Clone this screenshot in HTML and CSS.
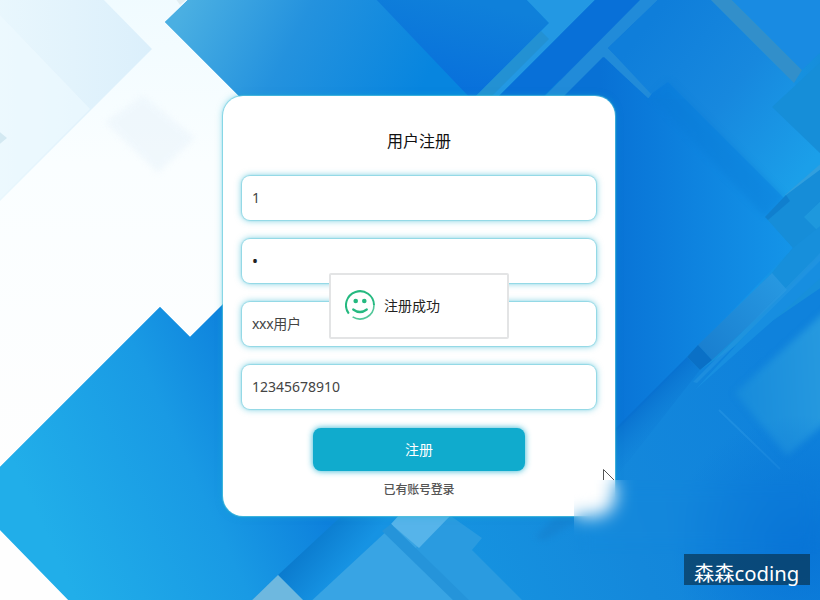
FILE: index.html
```html
<!DOCTYPE html>
<html lang="zh-CN">
<head>
<meta charset="utf-8">
<title>用户注册</title>
<link rel="stylesheet" href="styles.css">
</head>
<body>
<svg class="backdrop" viewBox="0 0 820 600" aria-hidden="true">
  <defs>
    <linearGradient id="base" gradientUnits="userSpaceOnUse" x1="180" y1="0" x2="820" y2="0"><stop offset="0" stop-color="#43a9e4"/><stop offset=".25" stop-color="#168de0"/><stop offset=".68" stop-color="#0872d8"/><stop offset=".9" stop-color="#1596e8"/><stop offset="1" stop-color="#168edb"/></linearGradient>
    <linearGradient id="top" gradientUnits="userSpaceOnUse" x1="180" y1="15" x2="400" y2="130"><stop offset="0" stop-color="#4aafe2"/><stop offset=".45" stop-color="#2492de"/><stop offset="1" stop-color="#0785df"/></linearGradient>
    <linearGradient id="left" gradientUnits="userSpaceOnUse" x1="30" y1="500" x2="270" y2="390"><stop offset="0" stop-color="#21aee9"/><stop offset=".6" stop-color="#199ae4"/><stop offset="1" stop-color="#0d80dc"/></linearGradient>
    <linearGradient id="pale" x1="0" y1="0" x2="1" y2="0"><stop offset="0" stop-color="#e9f7fd"/><stop offset="1" stop-color="#dbeffb"/></linearGradient>
    <linearGradient id="white" x1="0" y1="0" x2="0" y2="1"><stop offset="0" stop-color="#f0fbff"/><stop offset=".35" stop-color="#fafeff"/><stop offset="1" stop-color="#fefefe"/></linearGradient>
    <linearGradient id="dark" x1="0" y1="1" x2=".4" y2="0"><stop offset="0" stop-color="#066bdc"/><stop offset="1" stop-color="#0f80da"/></linearGradient>
    <linearGradient id="panel" gradientUnits="userSpaceOnUse" x1="620" y1="60" x2="790" y2="190"><stop offset="0" stop-color="#0f7eda"/><stop offset=".5" stop-color="#1788de"/><stop offset="1" stop-color="#1b9fe9"/></linearGradient>
    <linearGradient id="deep" gradientUnits="userSpaceOnUse" x1="600" y1="0" x2="790" y2="0"><stop offset="0" stop-color="#0871d5"/><stop offset=".5" stop-color="#0e83df"/><stop offset="1" stop-color="#1494e8"/></linearGradient>
    <linearGradient id="low" gradientUnits="userSpaceOnUse" x1="430" y1="580" x2="800" y2="430"><stop offset="0" stop-color="#1695e1"/><stop offset=".5" stop-color="#1488db"/><stop offset="1" stop-color="#0f82dc"/></linearGradient>
    <linearGradient id="shade" gradientUnits="userSpaceOnUse" x1="650" y1="388" x2="680" y2="418"><stop offset="0" stop-color="#086fce"/><stop offset="1" stop-color="#0e7dd6" stop-opacity="0"/></linearGradient>
    <linearGradient id="beam" gradientUnits="userSpaceOnUse" x1="700" y1="350" x2="790" y2="270"><stop offset="0" stop-color="#197fd0"/><stop offset="1" stop-color="#299be3"/></linearGradient>
    <linearGradient id="facet" x1="0" y1=".4" x2="1" y2=".3"><stop offset="0" stop-color="#178bdb"/><stop offset="1" stop-color="#279adf"/></linearGradient>
    <linearGradient id="fold" gradientUnits="userSpaceOnUse" x1="305" y1="545" x2="340" y2="575"><stop offset="0" stop-color="#0b7bce"/><stop offset="1" stop-color="#1693e3"/></linearGradient>
    <radialGradient id="pool" gradientUnits="userSpaceOnUse" cx="800" cy="545" r="130"><stop offset="0" stop-color="#0874d6"/><stop offset="1" stop-color="#0874d6" stop-opacity="0"/></radialGradient>
    <filter id="soft" x="-5%" y="-5%" width="110%" height="110%" color-interpolation-filters="sRGB"><feGaussianBlur stdDeviation=".7"/></filter>
    <filter id="mist" x="-20%" y="-20%" width="140%" height="140%" color-interpolation-filters="sRGB"><feGaussianBlur stdDeviation="3"/></filter>
  </defs>
  <rect width="820" height="600" fill="url(#base)"/>
  <g filter="url(#soft)">
    <path fill="url(#white)" d="M-5-5H193L165 22 300 157V230L190 337 160 307-5 472Z"/>
    <path fill="url(#pale)" d="M-5-5H99L152 49-5 206Z"/>
    <path fill="#effaff" opacity=".6" d="M-5 10 90 109-5 204Z"/>
    <path fill="#d3e9f2" d="M-5 128 7 138-5 148Z"/>
    <path fill="#edf6fc" opacity=".75" filter="url(#mist)" d="M143 95 195 138 158 173 105 122Z"/>
    <path fill="#e2eef2" d="M173-5H192L180 5Z"/>
    <path fill="url(#top)" d="M193-5 165 22 300 157H560V-5Z"/>
    <path fill="#fefefe" d="M-5 520 80 605H-5Z"/>
    <path fill="url(#left)" d="M-5 472 160 307 190 337 300 227H420V516H345L252 605H73L-5 525Z"/>
    <path fill="url(#dark)" d="M372-5H522L549 23 472 100Z"/>
    <path fill="#2398e3" d="M522-5H600L495 100H472L549 23Z"/>
    <path fill="#238dcb" opacity=".65" d="M541 31 549 39 488 100H472Z"/>
    <path fill="#0870d8" d="M600-5H645L540 100H495Z"/>
    <path fill="#218bd9" d="M645-5H663L608 48 653 92 648 99 604 57 560 101H540Z"/>
    <path fill="url(#deep)" d="M603 57 648 98 740 100 793 195 765 217 793 248 680 365 610 437V100H560Z"/>
    <path fill="url(#panel)" d="M663-5H706L796 85 820 105V165L785 199 668 82 651 94 608 48Z"/>
    <path fill="#087ad5" opacity=".35" filter="url(#mist)" d="M668 80 785 197 765 217 651 97Z"/>
    <path fill="#328fca" d="M706-5H727L802 70 794 83Z"/>
    <path fill="#198be2" d="M727-5H825V48L802 70Z"/>
    <path fill="#168ed8" d="M825 58 772 107 825 158Z"/>
    <path fill="#319fde" d="M825 160V171L790 201 785 195Z"/>
    <path fill="#168dd8" d="M786 195 825 166V330L772 273 793 248 765 217Z"/>
    <path fill="#0e78ca" opacity=".65" d="M786 195 790 201 768 220 765 217Z"/>
    <path fill="#27a2e2" opacity=".55" d="M804 217 825 197V238Z"/>
    <path fill="url(#low)" d="M825 222 610 437V516H345L252 605H825Z"/>
    <path fill="#178fdb" d="M793 248 825 222V285L700 370 687 357 772 273Z"/>
    <path fill="url(#beam)" d="M772 273 787 290 712 360 698 345Z"/>
    <path fill="#178ee0" d="M787 290 825 250V274L695 390Z"/>
    <path fill="#0a70c6" d="M687 357 698 345 712 360 700 370Z"/>
    <path fill="url(#shade)" d="M687 357 700 370 610 485V434Z"/>
    <path fill="#2a98e2" opacity=".45" d="M825 248 693 382 697 383 825 256Z"/>
    <path fill="url(#facet)" filter="url(#mist)" d="M829 308 735 393 787 456 829 420Z"/>
    <path fill="none" stroke="#2a98e5" stroke-width="2" opacity=".5" d="M719 410 780 469"/>
    <rect x="640" y="400" width="185" height="205" fill="url(#pool)"/>
    <path fill="url(#fold)" d="M348 510 278 575 308 605 412 510Z"/>
    <path fill="#6eb8df" d="M278 575 308 605H247Z"/>
    <path fill="#38a4e4" d="M307 605 403 516 491 605Z"/>
    <path fill="#2a9be0" d="M412 552 448 514 482 538 472 550 527 605H465Z"/>
    <path fill="#56b4ea" d="M400 514H452L419 548 391 524Z"/>
    <path fill="#2594da" d="M391 524 474 605H458L382 531Z"/>
    <path fill="#1580ce" opacity=".6" filter="url(#mist)" d="M557 514H590L545 540 535 538Z"/>
  </g>
</svg>

<main class="page">
  <form class="card">
    <h1 class="title">用户注册</h1>
    <div class="fields">
      <input class="field" type="text" value="1" aria-label="账号">
      <input class="field" type="password" value="1" aria-label="密码">
      <input class="field name" type="text" value="xxx用户" aria-label="昵称">
      <input class="field" type="text" value="12345678910" aria-label="手机号">
    </div>
    <button class="submit" type="button">注册</button>
    <a class="login">已有账号登录</a>
  </form>
</main>

<div class="toast" role="status">
  <svg class="smile" viewBox="0 0 30 30" aria-hidden="true">
    <path fill="none" stroke="#25b980" stroke-width="2" d="M3.8 23.6A14 14 0 1 1 29 15"/>
    <path fill="none" stroke="#25b980" stroke-width="1.6" d="M29 15A14 14 0 0 1 7.6 26.9" opacity=".8"/>
    <circle cx="10.7" cy="11" r="2.3" fill="#25b980"/>
    <circle cx="19.3" cy="11" r="2.3" fill="#25b980"/>
    <path fill="none" stroke="#25b980" stroke-width="2.2" stroke-linecap="round" d="M8.2 19.5Q15 24.5 21.8 19.5"/>
  </svg>
  <span class="message">注册成功</span>
</div>

<svg class="cursor" viewBox="0 0 14 12" aria-hidden="true"><path fill="#fff" stroke="#555" d="M1.5 14V1.5L14 14"/></svg>
<div class="haze"></div>
<div class="watermark">森森coding</div>
</body>
</html>
```

FILE: styles.css
```css
* {
  box-sizing: border-box;
}

body {
  margin: 0;
  height: 600px;
  overflow: hidden;
  position: relative;
  font-family: "Noto Sans", "Noto Sans CJK SC", sans-serif;
  font-size: 14px;
  color: #333;
}

.backdrop {
  position: absolute;
  inset: 0;
  width: 820px;
  height: 600px;
}

.page {
  position: relative;
  display: flex;
  justify-content: center;
  padding: 96px 0 0 18px;
}

.card {
  width: 392px;
  height: 420px;
  padding: 33px 19px;
  display: flex;
  flex-direction: column;
  align-items: center;
  background: #fff;
  border-radius: 20px;
  box-shadow: 0 0 1px 1px rgba(91, 199, 219, .65), 0 0 7px rgba(20, 174, 205, .5);
}

.title {
  margin: 0;
  font-size: 16px;
  line-height: 24px;
  font-weight: 400;
  color: #111;
}

.fields {
  width: 100%;
  margin-top: 23px;
  display: flex;
  flex-direction: column;
  gap: 19px;
}

.field {
  width: 100%;
  height: 44px;
  padding: 0 10px 2px;
  border: 0;
  outline: 0;
  border-radius: 8px;
  background: #fff;
  box-shadow: 0 0 1px 1px rgba(100, 200, 218, .5), 0 0 6px 1px rgba(20, 174, 205, .5);
  font: inherit;
  color: #444;
}

.field[type="password"] {
  padding-bottom: 1px;
  font-size: 16px;
  color: #222;
}

.name {
  letter-spacing: -.3px;
}

.submit {
  width: 212px;
  height: 43px;
  margin-top: 19px;
  padding: 0 0 2px;
  flex: none;
  border: 0;
  border-radius: 8px;
  background: #10abcd;
  box-shadow: 0 0 6px rgba(16, 171, 205, .9);
  font: inherit;
  color: #fff;
}

.login {
  margin-top: 10px;
  font-size: 12px;
  line-height: 18px;
  font-weight: 500;
  letter-spacing: -.2px;
  color: #555;
}

.toast {
  position: absolute;
  left: 329px;
  top: 273px;
  width: 180px;
  height: 66px;
  padding: 0 14px;
  display: flex;
  align-items: center;
  gap: 9px;
  border: 2px solid #e3e4e5;
  border-radius: 2px;
  background: #fff;
  color: #222;
}

.smile {
  width: 30px;
  height: 30px;
  margin-top: -2px;
}

.message {
  padding-bottom: 2px;
}

.cursor {
  position: absolute;
  left: 602px;
  top: 468px;
  width: 14px;
  height: 12px;
}

.haze {
  position: absolute;
  left: 574px;
  top: 480px;
  width: 246px;
  height: 74px;
  backdrop-filter: blur(9px);
}

.watermark {
  position: absolute;
  left: 684px;
  top: 554px;
  width: 126px;
  height: 31px;
  padding-left: 10px;
  background: rgba(8, 54, 86, .72);
  font-size: 20.3px;
  line-height: 39px;
  color: #fff;
}
```
